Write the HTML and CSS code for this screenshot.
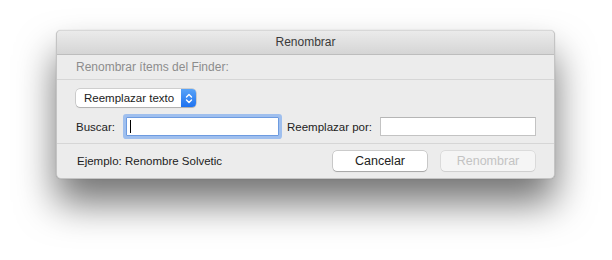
FILE: index.html
```html
<!DOCTYPE html>
<html lang="es">
<head>
    <meta charset="UTF-8">
    <title>Renombrar</title>
    <link rel="stylesheet" href="styles.css">
</head>
<body>
    <div class="stage">
        <div class="dialog">
            <div class="titlebar">Renombrar</div>
            <div class="header">Renombrar ítems del Finder:</div>
            <div class="options">
                <div class="popup">
                    <span class="popup-label">Reemplazar texto</span>
                    <span class="popup-arrows">
                        <svg width="8" height="11" viewBox="0 0 8 11">
                            <path d="M1.5 4 L4 1.5 L6.5 4 M1.5 7 L4 9.5 L6.5 7" fill="none" stroke="#fff" stroke-width="1.4" stroke-linecap="round" stroke-linejoin="round"/>
                        </svg>
                    </span>
                </div>
                <div class="fields">
                    <label class="field-label">Buscar:</label>
                    <div class="input focus"><span class="caret"></span></div>
                    <label class="field-label">Reemplazar por:</label>
                    <div class="input replace"></div>
                </div>
            </div>
            <div class="footer">
                <span class="example">Ejemplo: Renombre Solvetic</span>
                <div class="buttons">
                    <button class="btn">Cancelar</button>
                    <button class="btn disabled">Renombrar</button>
                </div>
            </div>
        </div>
    </div>
</body>
</html>
```

FILE: styles.css
```css
html, body {
    background: #ffffff;
}
body {
    margin: 0;
    font-family: 'Liberation Sans', Arial, sans-serif;
    font-size: 11.5px;
    color: #222;
}
.stage {
    height: 260px;
    box-sizing: border-box;
    padding: 30px 0 0 56px;
    overflow: hidden;
}
.dialog {
    width: 499px;
    height: 149px;
    background: #ececec;
    border-radius: 5px;
    border: 1px solid #c4c4c4;
    border-top-color: #d8d8d8;
    box-sizing: border-box;
    box-shadow: 0 24px 38px rgba(0,0,0,0.55), 0 0 1px rgba(0,0,0,0.3);
    display: flex;
    flex-direction: column;
}
.titlebar {
    height: 23px;
    line-height: 23px;
    text-align: center;
    font-size: 12px;
    color: #3a3a3a;
    background: linear-gradient(#ebebeb, #d5d5d5);
    border-bottom: 1px solid #bdbdbd;
    border-radius: 4px 4px 0 0;
    flex-shrink: 0;
}
.header {
    height: 24px;
    line-height: 24px;
    padding-left: 19px;
    color: #8c8c8c;
    font-size: 12px;
    border-bottom: 1px solid #d6d6d6;
    flex-shrink: 0;
}
.options {
    padding: 9px 19px 7px 19px;
    display: flex;
    flex-direction: column;
    gap: 10px;
    border-bottom: 1px solid #d6d6d6;
}
.popup {
    display: flex;
    align-items: stretch;
    width: 120px;
    height: 18px;
    background: #fff;
    border-radius: 4px;
    box-shadow: 0 0 0 0.5px rgba(0,0,0,0.25), 0 1px 1px rgba(0,0,0,0.15);
    overflow: hidden;
}
.popup-label {
    flex: 1;
    line-height: 18px;
    padding-left: 8px;
    color: #222;
}
.popup-arrows {
    width: 15px;
    background: linear-gradient(#58a3f8, #1e72f0);
    display: flex;
    align-items: center;
    justify-content: center;
}
.fields {
    display: flex;
    align-items: center;
    height: 19px;
}
.field-label {
    color: #222;
    white-space: nowrap;
}
.input {
    flex-shrink: 0;
    height: 19px;
    box-sizing: border-box;
    background: #fff;
    border: 1px solid #c3c3c3;
    border-top-color: #b5b5b5;
}
.input.focus {
    width: 153px;
    margin: 0 8px 0 11px;
    border: 1px solid #6d9be0;
    box-shadow: 0 0 0 3px rgba(96,154,240,0.55);
    border-radius: 1px;
    display: flex;
    align-items: center;
    padding-left: 3px;
}
.input.replace {
    width: 156px;
    margin-left: 8px;
}
.caret {
    width: 1px;
    height: 13px;
    background: #000;
}
.footer {
    flex: 1;
    display: flex;
    align-items: center;
    justify-content: space-between;
    padding: 0 19px 0 20px;
}
.example {
    color: #222;
}
.buttons {
    display: flex;
    gap: 14px;
}
.btn {
    width: 94px;
    height: 20px;
    padding: 0;
    font-family: inherit;
    font-size: 12.5px;
    color: #222;
    background: #fff;
    border: none;
    border-radius: 4px;
    box-shadow: 0 0 0 0.5px rgba(0,0,0,0.28), 0 1px 1px rgba(0,0,0,0.18);
}
.btn.disabled {
    color: #c3c3c3;
    background: #f5f5f5;
    box-shadow: 0 0 0 0.5px rgba(0,0,0,0.14), 0 1px 1px rgba(0,0,0,0.06);
}
```
